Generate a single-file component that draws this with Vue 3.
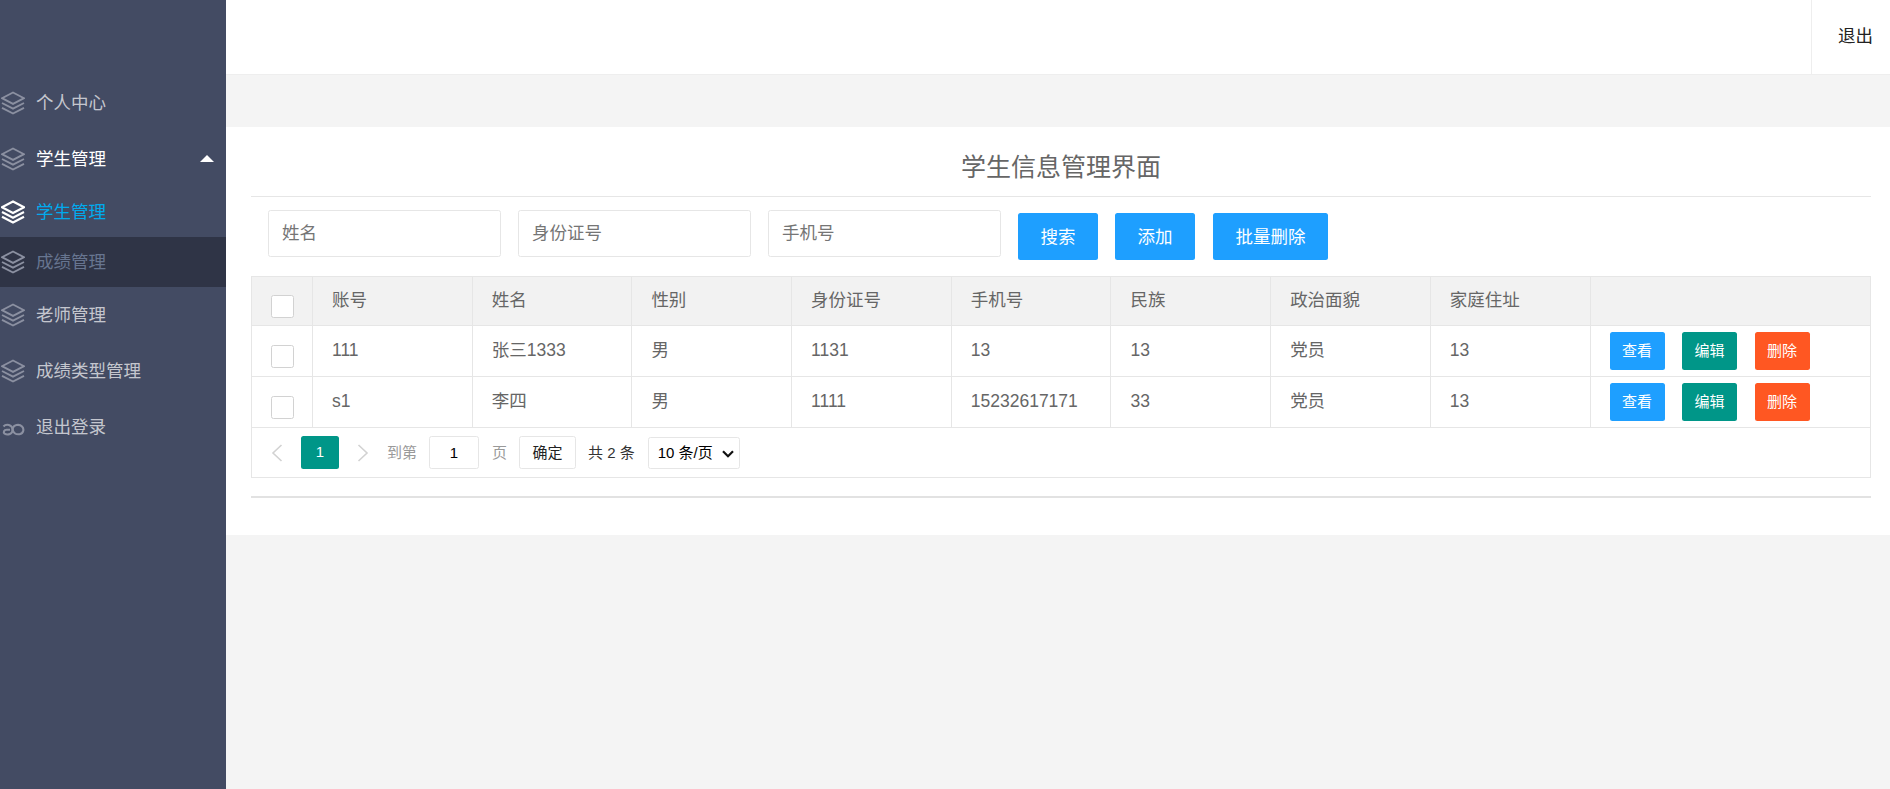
<template>
  <div class="page">
    <aside class="side">
      <ul class="nav">
        <li v-for="item in navItems" :key="item.label + item.type" class="nav-item" :class="`nav-item--${item.type}`">
          <svg v-if="item.icon === 'layers'" class="nav-icon" viewBox="0 0 24 24" fill="none">
            <path d="M12 1.5 23 7.2 12 12.9 1 7.2Z" />
            <path d="M1 12 12 17.7 23 12" />
            <path d="M1 16.8 12 22.5 23 16.8" />
          </svg>
          <svg v-else class="nav-icon nav-icon--logout" viewBox="0 0 24 24" fill="none">
            <path d="M2.5 11.5C5 8.6 11.2 9.2 11.6 14.5 11.9 19 6.6 20.6 3.6 18.6 2 17.4 3 14.8 5.6 14.8H9" />
            <path d="M11.6 14.5C12 9.2 18.5 9 21 11.5 23.4 14 22.6 18.5 18.6 19.2 14.6 19.8 12 17.6 11.6 14.5Z" />
          </svg>
          <span class="nav-label">{{ item.label }}</span>
          <i v-if="item.type === 'open'" class="nav-more"></i>
        </li>
      </ul>
    </aside>

    <main class="main">
      <header class="topbar">
        <div class="logout">退出</div>
      </header>

      <section class="panel">
        <h1 class="title">学生信息管理界面</h1>

        <div class="filters">
          <input class="field" placeholder="姓名" />
          <input class="field" placeholder="身份证号" />
          <input class="field" placeholder="手机号" />
          <button class="btn">搜索</button>
          <button class="btn">添加</button>
          <button class="btn btn--wide">批量删除</button>
        </div>

        <div class="table-wrap">
          <table class="table">
            <thead>
              <tr>
                <th class="check-cell"><span class="check"></span></th>
                <th v-for="col in columns" :key="col">{{ col }}</th>
                <th class="action-cell"></th>
              </tr>
            </thead>
            <tbody>
              <tr v-for="row in rows" :key="row[0]">
                <td class="check-cell"><span class="check"></span></td>
                <td v-for="(val, i) in row" :key="i">{{ val }}</td>
                <td class="action-cell">
                  <div class="actions">
                    <button class="mini mini--blue">查看</button>
                    <button class="mini mini--teal">编辑</button>
                    <button class="mini mini--red">删除</button>
                  </div>
                </td>
              </tr>
            </tbody>
          </table>

          <div class="pager">
            <svg class="pager-arrow" viewBox="0 0 12 20" fill="none"><path d="M10.5 2 2 10l8.5 8" /></svg>
            <span class="pager-num">1</span>
            <svg class="pager-arrow" viewBox="0 0 12 20" fill="none"><path d="M1.5 2 10 10l-8.5 8" /></svg>
            <span class="pager-text pager-goto">到第</span>
            <input class="pager-input" value="1" />
            <span class="pager-text">页</span>
            <button class="pager-ok">确定</button>
            <span class="pager-total">共 2 条</span>
            <span class="pager-select">
              <select class="pager-size">
                <option>10 条/页</option>
              </select>
              <svg class="pager-chevron" viewBox="0 0 12 8" fill="none"><path d="M1 1.2 6 6.2 11 1.2" /></svg>
            </span>
          </div>
        </div>

        <div class="rule"></div>
      </section>
    </main>
  </div>
</template>

<script setup>
const navItems = [
  { label: '个人中心', type: 'top', icon: 'layers' },
  { label: '学生管理', type: 'open', icon: 'layers' },
  { label: '学生管理', type: 'current', icon: 'layers' },
  { label: '成绩管理', type: 'child', icon: 'layers' },
  { label: '老师管理', type: 'top', icon: 'layers' },
  { label: '成绩类型管理', type: 'top', icon: 'layers' },
  { label: '退出登录', type: 'top', icon: 'logout' }
]

const columns = ['账号', '姓名', '性别', '身份证号', '手机号', '民族', '政治面貌', '家庭住址']

const rows = [
  ['111', '张三1333', '男', '1131', '13', '13', '党员', '13'],
  ['s1', '李四', '男', '1111', '15232617171', '33', '党员', '13']
]
</script>

<style>
html, body {
  margin: 0;
  background: #f4f4f4;
}
</style>

<style scoped>
.page {
  display: flex;
  min-height: 789px;
  font-family: "Liberation Sans", "Noto Sans CJK SC", sans-serif;
  font-size: 17.5px;
  line-height: 24px;
  color: #666;
}

.side {
  width: 226px;
  flex-shrink: 0;
  padding-top: 75px;
  background: #434b63;
}
.nav {
  margin: 0;
  padding: 0;
  list-style: none;
}
.nav-item {
  position: relative;
  display: flex;
  align-items: center;
  gap: 11px;
  height: 56px;
  padding-left: 1px;
  color: rgba(255, 255, 255, 0.7);
}
.nav-item--open { color: #fff; }
.nav-item--current,
.nav-item--child { height: 50px; }
.nav-item--current { color: #01aaed; }
.nav-item--child {
  background: #2f3446;
  color: #677590;
}
.nav-icon {
  width: 24px;
  height: 24px;
  flex-shrink: 0;
  stroke: #8b90a1;
  stroke-width: 1.9;
}
.nav-item--current .nav-icon {
  stroke: #fff;
  stroke-width: 2.2;
}
.nav-icon--logout { stroke-width: 2.1; }
.nav-more {
  position: absolute;
  top: 24px;
  right: 12px;
  border: 7.5px solid transparent;
  border-top-width: 0;
  border-bottom-color: #fff;
}

.main {
  flex: 1;
  min-width: 0;
}
.topbar {
  display: flex;
  justify-content: flex-end;
  height: 74px;
  border-bottom: 1px solid #eee;
  background: #fff;
}
.logout {
  width: 79px;
  border-left: 1px solid #eee;
  padding-left: 26px;
  box-sizing: border-box;
  line-height: 72px;
  color: #222;
}

.panel {
  margin-top: 52px;
  padding: 0 19px 37px 25px;
  background: #fff;
}
.title {
  margin: 0;
  height: 70px;
  border-bottom: 1px solid #e6e6e6;
  box-sizing: border-box;
  font-size: 25px;
  font-weight: 400;
  line-height: 80px;
  text-align: center;
  color: #666;
}
.filters {
  display: flex;
  gap: 17px;
  align-items: flex-start;
  height: 79px;
  padding: 13px 0 0 17px;
  box-sizing: border-box;
}
.field {
  width: 233px;
  height: 47px;
  box-sizing: border-box;
  border: 1px solid #e6e6e6;
  border-radius: 2.5px;
  padding: 0 13px;
  font: inherit;
  color: #666;
  outline: none;
}
.field::placeholder { color: #757575; }
.btn {
  height: 47px;
  margin-top: 3px;
  border: 0;
  border-radius: 2.5px;
  padding: 0 22.5px;
  background: #1e9fff;
  font: inherit;
  color: #fff;
}
.btn--wide { margin-left: 1px; }

.table-wrap {
  border: 1px solid #e6e6e6;
  border-top: 0;
}
.table {
  width: 100%;
  border-collapse: collapse;
  table-layout: fixed;
}
.table th,
.table td {
  height: 51px;
  padding: 0 19px 3px;
  border: 1px solid #e6e6e6;
  box-sizing: border-box;
  font-weight: 400;
  text-align: left;
}
.table tr > :first-child { border-left: 0; }
.table tr > :last-child { border-right: 0; }
.table th {
  height: 49px;
  background: #f2f2f2;
}
.table th.check-cell,
.table td.check-cell {
  width: 60.5px;
  padding: 11px 0 0 19px;
}
.table th:not(.check-cell) { width: 159.7px; }
.table th.action-cell { width: auto; }
.table td.action-cell { padding: 0 19px; }
.check {
  display: block;
  width: 22.5px;
  height: 22.5px;
  box-sizing: border-box;
  border: 1px solid #d2d2d2;
  border-radius: 2.5px;
  background: #fff;
}
.actions {
  display: flex;
  gap: 17.5px;
}
.mini {
  width: 55px;
  height: 38px;
  border: 0;
  border-radius: 2.5px;
  padding: 0;
  font: inherit;
  font-size: 15px;
  color: #fff;
}
.mini--blue { background: #1e9fff; }
.mini--teal { background: #009688; }
.mini--red { background: #ff5722; }

.pager {
  display: flex;
  align-items: center;
  height: 49px;
  padding-left: 19px;
  font-size: 15px;
}
.pager-arrow {
  width: 12px;
  height: 20px;
  stroke: #d2d2d2;
  stroke-width: 1.6;
}
.pager-num {
  width: 38px;
  height: 33px;
  margin: 0 18px;
  border-radius: 2.5px;
  background: #009688;
  line-height: 32px;
  text-align: center;
  color: #fff;
}
.pager-text { color: #999; }
.pager-goto {
  margin-left: 18px;
  margin-right: 12px;
}
.pager-input {
  width: 50px;
  height: 33px;
  box-sizing: border-box;
  margin-right: 13px;
  border: 1px solid #e6e6e6;
  border-radius: 2.5px;
  padding: 0;
  font: inherit;
  text-align: center;
  color: #000;
  outline: none;
}
.pager-ok {
  width: 57px;
  height: 33px;
  margin-left: 12px;
  border: 1px solid #e6e6e6;
  border-radius: 2.5px;
  padding: 0;
  background: #fff;
  font: inherit;
  color: #222;
}
.pager-total {
  margin: 0 13px 0 12px;
  color: #333;
}
.pager-select {
  position: relative;
  display: block;
  height: 32px;
}
.pager-size {
  display: block;
  appearance: none;
  width: 92px;
  height: 32px;
  border: 1px solid #e6e6e6;
  border-radius: 2.5px;
  padding: 0 0 0 9px;
  background: #fff;
  font: inherit;
  color: #000;
  outline: none;
}
.pager-chevron {
  position: absolute;
  top: 13px;
  right: 6px;
  width: 12px;
  height: 8px;
  stroke: #111;
  stroke-width: 2.2;
  pointer-events: none;
}

.rule {
  height: 2px;
  margin-top: 18px;
  background: #e2e2e2;
}
</style>
